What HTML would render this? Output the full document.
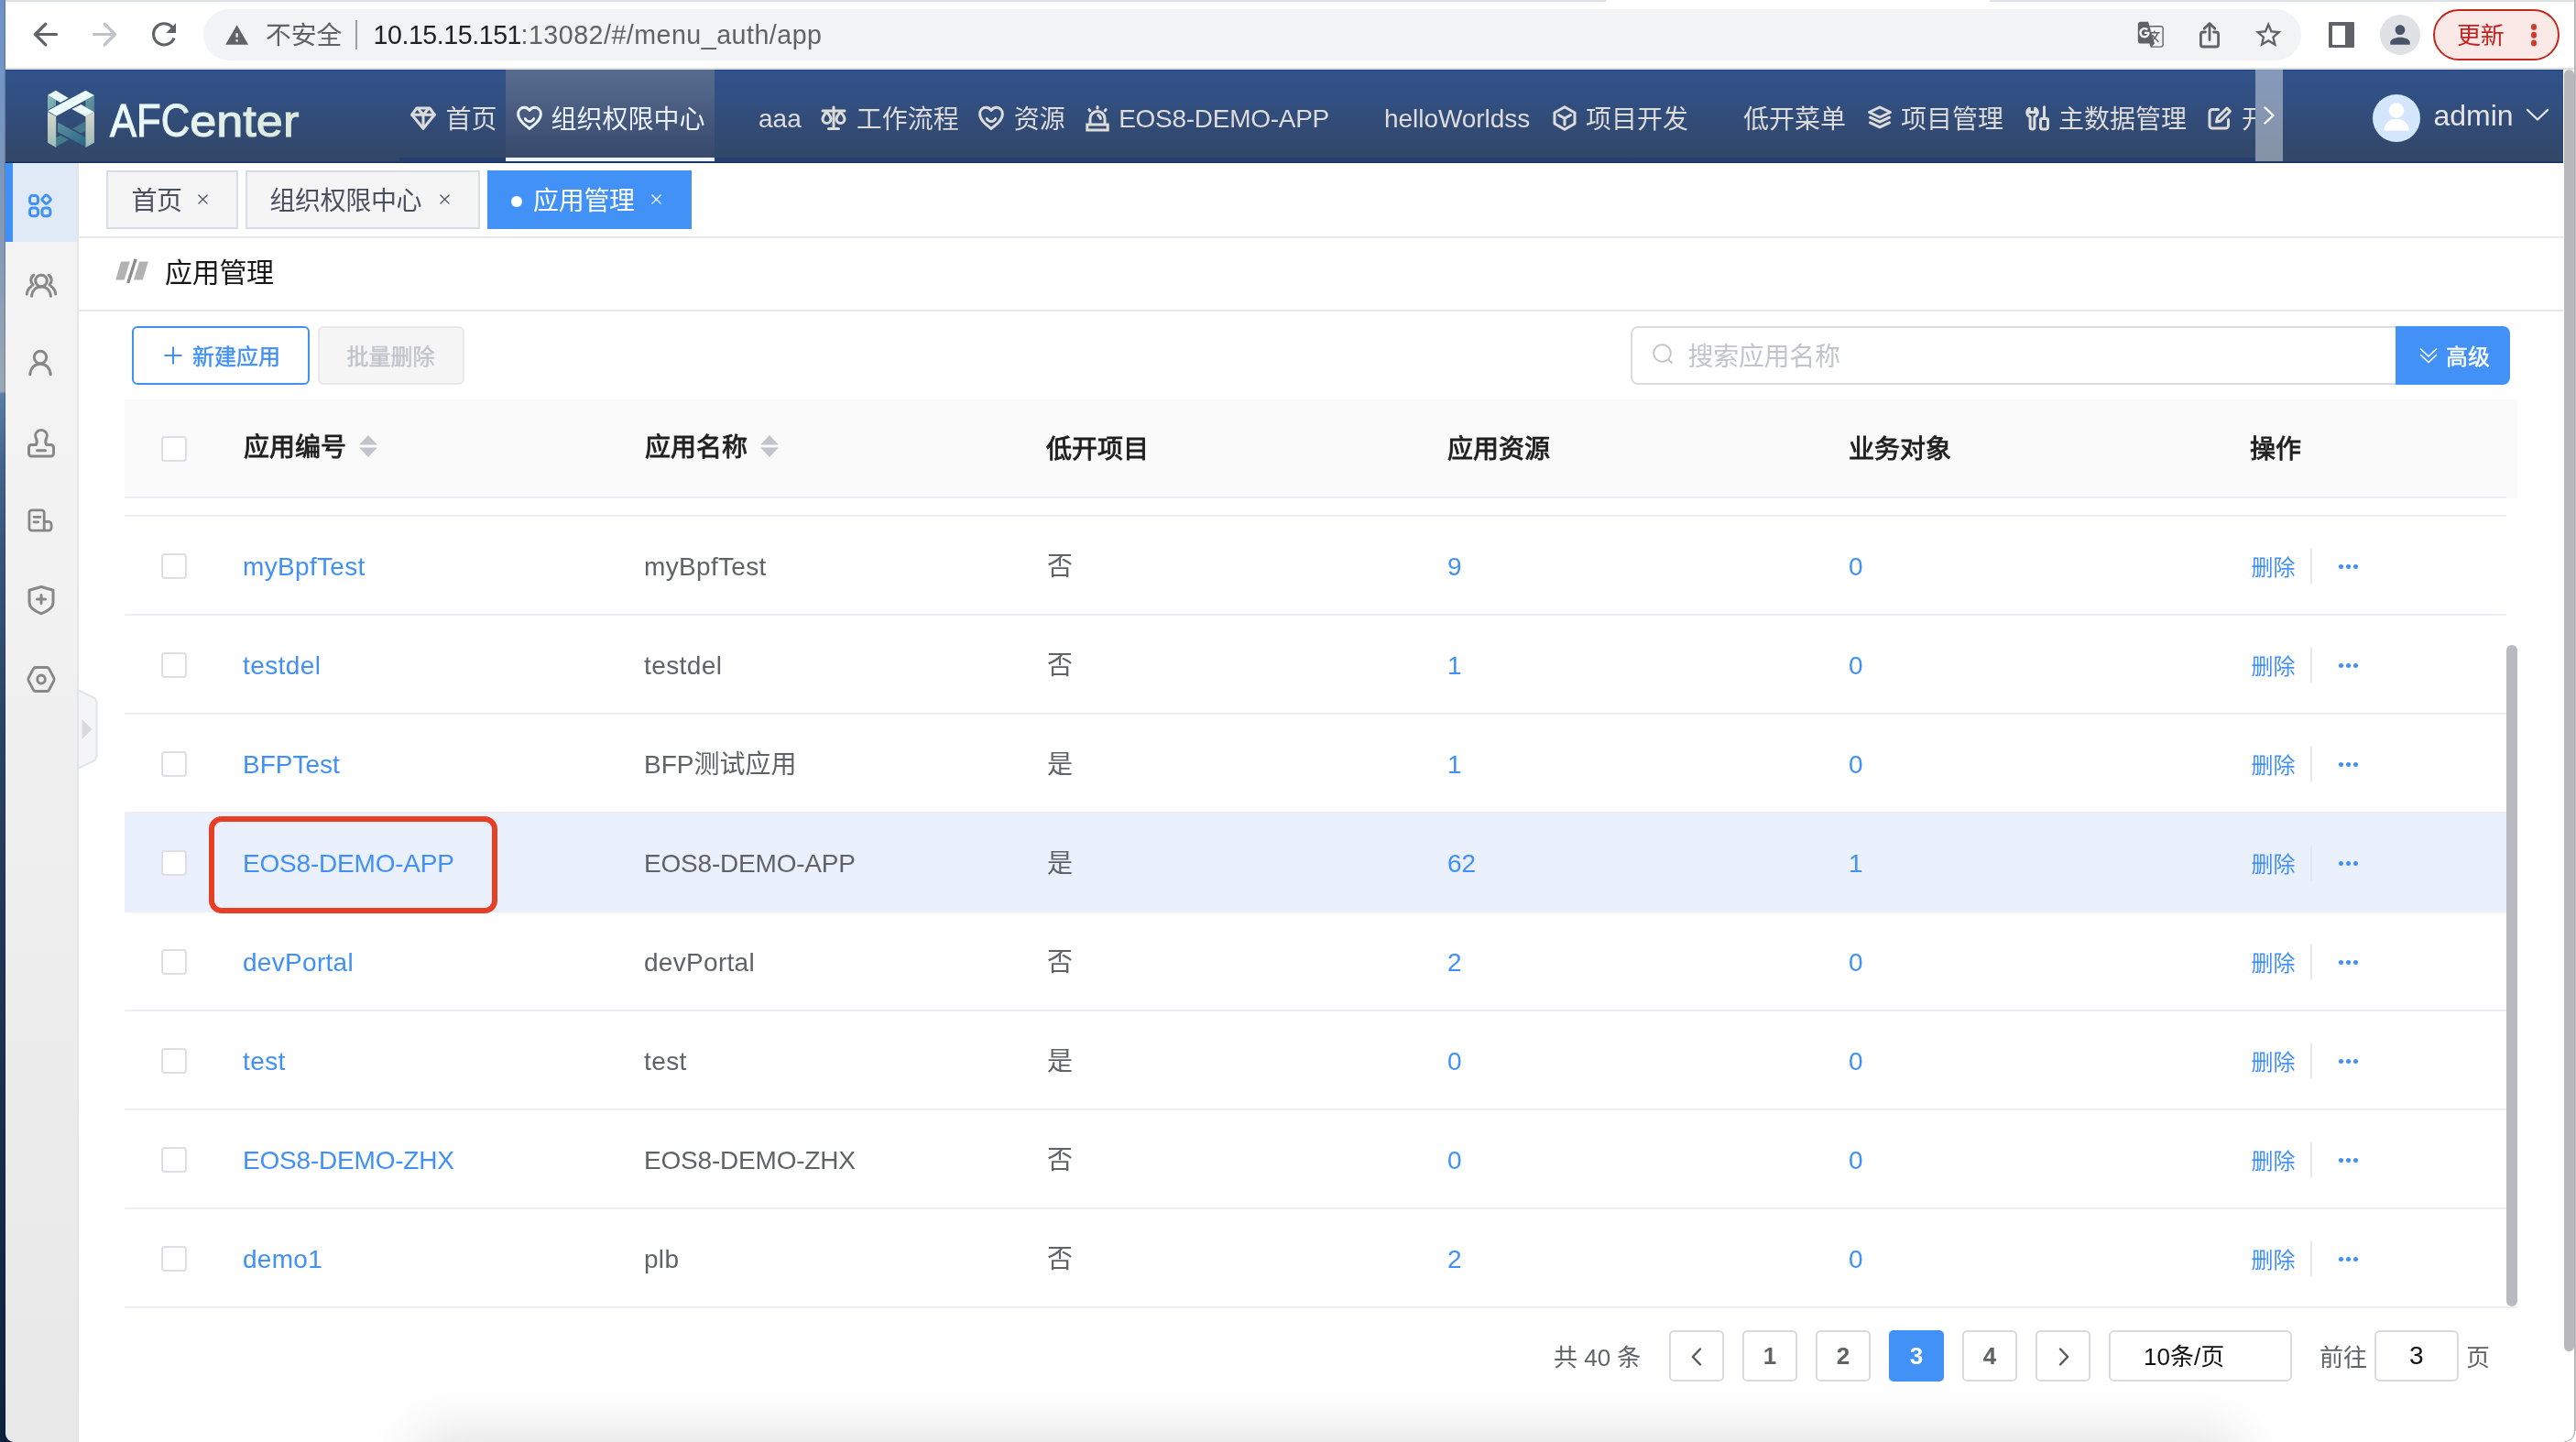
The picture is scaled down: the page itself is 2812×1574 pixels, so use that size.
<!DOCTYPE html>
<html lang="zh-CN">
<head>
<meta charset="utf-8">
<title>AFCenter - 应用管理</title>
<style>
*{box-sizing:border-box;margin:0;padding:0}
html,body{width:2812px;height:1574px;overflow:hidden;background:#fff}
body{font-family:"Liberation Sans","Noto Sans CJK SC",sans-serif;color:#606266;-webkit-font-smoothing:antialiased}
#root{will-change:transform;position:relative;width:2812px;height:1574px;overflow:hidden;background:#fff}
.abs{position:absolute}
svg{display:block;overflow:visible}

/* wallpaper strip on the left */
#wall{position:absolute;left:0;top:0;width:6px;height:1574px;z-index:50;background:linear-gradient(90deg,rgba(0,0,0,0) 60%,rgba(0,0,20,.18) 100%),linear-gradient(180deg,#6f93c8 0,#7396c5 75px,#7b97bd 177px,#899cb6 300px,#9ba8b6 427px,#5a7fab 430px,#46668f 500px,#39557c 600px,#2b4368 800px,#22385a 1000px,#162b4a 1300px,#0e2340 1574px)}
#win{position:absolute;left:0;top:0;width:2812px;height:1574px;background:#fff;overflow:hidden}

/* browser toolbar */
#tabstrip{position:absolute;left:6px;top:0;width:2806px;height:2px;background:#dee1e6}
#tabgap{position:absolute;left:1753px;top:0;width:419px;height:3px;background:#fff;border-radius:0 0 6px 6px}
#tbline{position:absolute;left:6px;top:74px;width:2806px;height:2px;background:#dfe0e0}
#pill{position:absolute;left:222px;top:10px;width:2290px;height:56px;border-radius:28px;background:#f1f3f4}
.urltxt{position:absolute;white-space:nowrap;font-size:28px;line-height:56px;top:0}

/* app header */
#hdr{position:absolute;left:6px;top:76px;width:2792px;height:102px;background:linear-gradient(180deg,#31528b 0%,#314f80 35%,#324a72 70%,#324868 95%);border-bottom:1px solid #17315f;box-shadow:inset 0 -1px 0 rgba(22,48,95,.5),inset 0 1px 0 rgba(30,66,128,.9)}
#menu{position:absolute;left:436px;top:76px;width:2026px;height:101px;overflow:hidden}
#menuline{position:absolute;left:436px;top:172px;width:2026px;height:5px;background:#243f70}
#actline{position:absolute;left:552px;top:172px;width:228px;height:4px;background:#eaf3ff}
.mi{position:absolute;top:0;height:96px;white-space:nowrap;font-size:28px;color:#dedcda;line-height:96px}
.mi svg{position:absolute;left:12px;top:39px}
.mi span{position:absolute;left:48px;top:7px;height:96px;line-height:96px}
.mi span.lat{top:5.700px}
.mi.act{background:linear-gradient(180deg,#576b8f 0%,#4f6387 30%,#46597c 55%,#3d5073 80%,#374a6a 100%);color:#eaf3ff;height:96px}

/* sidebar */
#side{position:absolute;left:6px;top:178px;width:80px;height:1396px;background:linear-gradient(180deg,#f3f3f3 0,#f2f2f2 30%,#ececec 70%,#e8e8e8 100%);border-right:2px solid #e5e5e5}
#side .on{position:absolute;left:0;top:0;width:78px;height:86px;background:#e0eaf6;border-left:8px solid #4090f7}
.sic{position:absolute}

/* tabs */
.tab{position:absolute;top:186px;height:64px;border:2px solid #d8dce5;background:#f5f5f5;font-size:28px;color:#495060;line-height:60px;white-space:nowrap}
.tab.on{background:#4191f7;border-color:#4191f7;color:#fff}
.hline{position:absolute;height:2px;background:#e6e9ef}

/* buttons */
.btn{position:absolute;top:356px;height:64px;border-radius:6px;font-size:24px;line-height:60px;white-space:nowrap}

/* table */
.th{position:absolute;top:436px;height:106px;line-height:106px;font-size:28px;font-weight:400;-webkit-text-stroke:.9px #1f1f1f;color:#1f1f1f;white-space:nowrap}
.row{position:absolute;left:136px;width:2600px;height:108px;border-bottom:2px solid #ebeef5}
.row.hl{background:#ebf0fd;border-bottom-color:#ebf0fd}
.row div{position:absolute;top:0;height:108px;line-height:110px;font-size:28px;white-space:nowrap}
.row .cb{left:40px;top:40px;width:28px;height:28px;border:2px solid #dcdfe6;border-radius:4px;background:#fff}
.row .c1{left:129px;color:#4090f7}
.row .c2{left:567px;color:#606266}
.row .c3{left:1007px;color:#606266}
.row .c4{left:1444px;color:#4090f7}
.row .c5{left:1882px;color:#4090f7}
.row .del{left:2321.5px;top:.5px;font-size:24px;color:#4090f7}
.row .dv{left:2386px;top:35px;width:2px;height:38px;background:#e4e7ed}
.row .dots{left:2417px;top:52px;width:22px;height:6px}
.row .dots i{position:absolute;top:0;width:5px;height:5px;border-radius:50%;background:#4090f7}

/* pagination */
.pg{position:absolute;top:1452px;height:56px;width:60px;border:2px solid #d9dbdf;border-radius:5px;background:#fff;font-size:26px;font-weight:700;color:#606266;text-align:center;line-height:52px}
.pg.on{background:#4191f7;border-color:#4191f7;color:#fff}
.pt{position:absolute;top:1452px;height:56px;line-height:56px;font-size:26px;color:#606266;white-space:nowrap}
</style>
</head>
<body>
<div id="root">
<div id="wall"></div>
<div id="win">
<div id="tabstrip"></div><div id="tabgap"></div>
<div id="pill"></div>
<div id="tbline"></div>
<svg class="abs" style="left:30px;top:18px" width="180" height="40" viewBox="30 18 180 40" fill="none" stroke-linecap="round" stroke-linejoin="round">
 <path d="M61.5 37.5H39M49.8 26.2L38.5 37.5L49.8 48.8" stroke="#5f6368" stroke-width="3.2"/>
 <path d="M102.5 37.5H125M114.2 26.2L125.5 37.5L114.2 48.8" stroke="#bfc2c6" stroke-width="3.2"/>
 <path d="M188.6 30.6A11.6 11.6 0 1 0 190 41.5" stroke="#5f6368" stroke-width="3.2" stroke-linecap="butt"/>
 <path d="M192 25.2V36H181.2Z" fill="#5f6368" stroke="none"/>
</svg>
<svg class="abs" style="left:244.8px;top:25px" width="27.2" height="27.2" viewBox="0 0 24 24"><path fill="#5f6368" d="M1 21h22L12 2 1 21zm12-3h-2v-2h2v2zm0-4h-2v-4h2v4z"/></svg>
<div class="urltxt" style="left:290px;top:11.3px;font-size:27.8px;color:#5f6368;letter-spacing:0">不安全</div>
<div class="abs" style="left:388px;top:22px;width:2px;height:32px;background:#9aa0a6"></div>
<div class="urltxt" style="left:407.5px;top:10px;font-size:28.6px;color:#202124;letter-spacing:-.45px">10.15.15.151</div>
<div class="urltxt" style="left:568.5px;top:10px;font-size:28.6px;color:#5f6368;letter-spacing:.5px">:13082/#/menu_auth/app</div>
<!-- translate -->
<svg class="abs" style="left:2331.2px;top:21.2px" width="33.6" height="33.6" viewBox="0 0 24 24"><path fill="#5f6368" d="M20 5h-9.12L10 2H4c-1.1 0-2 .9-2 2v13c0 1.1.9 2 2 2h7l1 3h8c1.1 0 2-.9 2-2V7c0-1.1-.9-2-2-2zM7.17 14.59c-2.25 0-4.09-1.83-4.09-4.09s1.83-4.09 4.09-4.09c1.04 0 1.99.37 2.74 1.07l.07.06-1.23 1.18-.06-.05c-.29-.27-.78-.59-1.52-.59-1.31 0-2.38 1.09-2.38 2.42s1.07 2.42 2.38 2.42c1.37 0 1.96-.87 2.12-1.46H7.08V9.91h3.95l.01.07c.04.21.05.4.05.61 0 2.35-1.61 4-3.92 4zm6.03-1.71c.33.6.74 1.18 1.19 1.7l-.54.53-.65-2.23zm.77-.76h-.99l-.31-1.04h3.99s-.34 1.31-1.56 2.74c-.52-.62-.89-1.23-1.13-1.7zM21 20c0 .55-.45 1-1 1h-7l2-2-.81-2.77.92-.92L17.79 18l.73-.73-2.71-2.68c.9-1.03 1.6-2.25 1.92-3.51H19v-1.04h-3.64V9h-1.04v1.04h-1.96L11.18 6H20c.55 0 1 .45 1 1v13z"/></svg>
<!-- share -->
<svg class="abs" style="left:2396px;top:20px" width="32" height="36" viewBox="2396 20 32 36" fill="none" stroke="#5f6368" stroke-width="2.8" stroke-linecap="round" stroke-linejoin="round">
 <path d="M2407.5 35H2405a2.6 2.6 0 0 0-2.6 2.6V48.4a2.6 2.6 0 0 0 2.6 2.6h14a2.6 2.6 0 0 0 2.6-2.6V37.6A2.6 2.6 0 0 0 2419 35h-2.5"/>
 <path d="M2412 43.5V26M2406.2 31.2L2412 25.4L2417.8 31.2"/>
</svg>
<!-- star -->
<svg class="abs" style="left:2459px;top:21px" width="34.4" height="34.4" viewBox="0 0 24 24"><path fill="#5f6368" d="M22 9.24l-7.19-.62L12 2 9.19 8.63 2 9.24l5.46 4.73L5.82 21 12 17.27 18.18 21l-1.63-7.03L22 9.24zM12 15.4l-3.76 2.27 1-4.28-3.32-2.88 4.38-.38L12 6.1l1.71 4.04 4.38.38-3.32 2.88 1 4.28L12 15.4z"/></svg>
<!-- side panel -->
<div class="abs" style="left:2542px;top:24px;width:28px;height:28px;background:#5f6368;border-radius:1px"></div>
<div class="abs" style="left:2546px;top:27.500px;width:13.500px;height:21px;background:#fff"></div>
<!-- profile -->
<div class="abs" style="left:2598px;top:16px;width:44px;height:44px;border-radius:50%;background:#dfe1e5"></div>
<svg class="abs" style="left:2604px;top:22px" width="32" height="32" viewBox="0 0 24 24"><path fill="#4a5369" d="M12 12c2.21 0 4-1.79 4-4s-1.790-4-4-4-4 1.790-4 4 1.790 4 4 4zm0 2c-2.670 0-8 1.340-8 4v2h16v-2c0-2.660-5.330-4-8-4z"/></svg>
<!-- update pill -->
<div class="abs" style="left:2656px;top:10px;width:138px;height:56px;border-radius:28px;border:2px solid #c4281c;background:#fbe9e7"></div>
<div class="urltxt" style="left:2682px;top:11.4px;font-size:26px;color:#c5221f;letter-spacing:-.3px">更新</div>
<div class="abs" style="left:2762.8px;top:26.300px;width:6.400px;height:6.400px;border-radius:50%;background:#d13b2c;box-shadow:0 8.800px 0 #d13b2c,0 17.600px 0 #d13b2c"></div>

<div id="hdr"></div>
<!-- logo -->
<svg class="abs" style="left:46px;top:94px" width="64" height="72" viewBox="0 0 1282 1442">
 <defs>
  <linearGradient id="lgP" x1="0" y1="0" x2="0" y2="1"><stop offset="0" stop-color="#d9d9cd"/><stop offset="1" stop-color="#9db9b5"/></linearGradient>
  <linearGradient id="lgS" x1="0" y1="0" x2="1" y2="1"><stop offset="0" stop-color="#8fbcbc"/><stop offset="1" stop-color="#66a0a6"/></linearGradient>
  <linearGradient id="lgS2" x1="0" y1="0" x2="1" y2="1"><stop offset="0" stop-color="#6a9ba4"/><stop offset="1" stop-color="#4f8594"/></linearGradient>
  <linearGradient id="lgX" x1="0" y1="0" x2="1" y2="1"><stop offset="0" stop-color="#5c909c"/><stop offset="1" stop-color="#296688"/></linearGradient>
 </defs>
 <polygon points="940,775 940,985 850,1030 665,925" fill="#44798e"/>
 <polygon points="305,1125 400,1076 580,1170 305,1322" fill="#457b8f"/>
 <polygon points="340,790 940,1115 940,1320 340,1000" fill="url(#lgX)"/>
 <polygon points="120,200 300,300 300,425 120,520" fill="url(#lgS)"/>
 <polygon points="950,305 1140,200 1140,565 950,457" fill="url(#lgS2)"/>
 <polygon points="120,560 305,665 305,1340 120,1235" fill="url(#lgP)"/>
 <polygon points="950,665 1140,570 1140,1235 950,1340" fill="url(#lgP)"/>
 <polygon points="120,195 300,95 575,260 400,360" fill="#ebfbfb"/>
 <polygon points="650,500 850,400 1140,565 950,665" fill="#ebfbfb"/>
 <polygon points="120,540 950,95 1140,200 310,655" fill="#ebfbfb"/>
</svg>
<svg class="abs" id="brand" style="left:110px;top:96px" width="240" height="70" viewBox="110 96 240 70" font-family="'Liberation Sans',sans-serif"><defs><linearGradient id="lgT" gradientUnits="userSpaceOnUse" x1="119" y1="0" x2="327" y2="0"><stop offset="0" stop-color="#ecfcfc"/><stop offset=".45" stop-color="#e6f4ee"/><stop offset="1" stop-color="#dae7d9"/></linearGradient><linearGradient id="lgT1" gradientUnits="userSpaceOnUse" x1="0" y1="0" x2="96" y2="0"><stop offset="0" stop-color="#ecfcfc"/><stop offset="1" stop-color="#e8f7f2"/></linearGradient><linearGradient id="lgT2" gradientUnits="userSpaceOnUse" x1="0" y1="0" x2="114" y2="0"><stop offset="0" stop-color="#e7f5ef"/><stop offset="1" stop-color="#dae7d9"/></linearGradient></defs><text x="120" y="148.800" font-size="50.500" fill="url(#lgT)" stroke="url(#lgT)" stroke-width="1.080"><tspan textLength="87.300" lengthAdjust="spacingAndGlyphs">AFC</tspan><tspan font-size="48" textLength="119" lengthAdjust="spacingAndGlyphs">enter</tspan></text></svg>
<!-- nav menu -->
<div id="menu">
 <div class="mi" style="left:0;width:116px"><svg style="top:39.600px;left:12.200px" width="28" height="26" viewBox="0 0 28 26" fill="none" stroke="#dedcda" stroke-width="3" stroke-linejoin="round" stroke-linecap="round"><path d="M7 2H21L26.300 9.200 14 24.300 1.700 9.200z"/><path d="M1.700 9.200H26.300M8.300 2.500L14 9.200l5.700-6.700M14 9.200V23.500"/></svg><span style="left:50.5px">首页</span></div>
 <div class="mi act" style="left:116px;width:228px"><svg width="28" height="28" viewBox="0 0 28 28" fill="none" stroke="#eaf3ff" stroke-width="2.900" stroke-linecap="round" stroke-linejoin="round"><path d="M14 25.5C8.5 21.2 1.6 16 1.6 9.2C1.6 5.2 4.6 2.2 8.2 2.2c2.4 0 4.6 1.3 5.8 3.4c1.2-2.100 3.400-3.400 5.800-3.400c3.600 0 6.600 3 6.600 7c0 6.800-6.900 12-12.400 16.300z"/><path d="M9.300 14.600c1.100 2 2.800 3 4.700 3s3.600-1 4.700-3"/></svg><span style="left:49.5px">组织权限中心</span></div>
 <div class="mi" style="left:344px;width:107px"><span class="lat">aaa</span></div>
 <div class="mi" style="left:450.7px;width:172px"><svg style="left:9px" width="28" height="28" viewBox="0 0 28 28" fill="none" stroke="#dedcda" stroke-width="3" stroke-linecap="round" stroke-linejoin="round"><path d="M14 2V25.500M8.500 25.500h11M2 6h24"/><path d="M6.500 6.800c-1.500 2.600-4.500 5.300-4.500 8.300a4.500 4.500 0 0 0 9 0c0-3-3-5.700-4.500-8.300zM21.500 6.800c-1.500 2.600-4.500 5.300-4.500 8.300a4.500 4.500 0 0 0 9 0c0-3-3-5.700-4.500-8.300z"/></svg><span>工作流程</span></div>
 <div class="mi" style="left:622.7px;width:116px"><svg style="left:9px" width="28" height="28" viewBox="0 0 28 28" fill="none" stroke="#dedcda" stroke-width="2.900" stroke-linecap="round" stroke-linejoin="round"><path d="M14 25.500C8.500 21.200 1.600 16 1.600 9.200C1.600 5.200 4.600 2.200 8.200 2.200c2.400 0 4.600 1.300 5.800 3.400c1.200-2.100 3.400-3.400 5.800-3.400c3.600 0 6.600 3 6.600 7c0 6.800-6.900 12-12.400 16.300z"/><path d="M9.300 14.600c1.100 2 2.800 3 4.700 3s3.600-1 4.700-3"/></svg><span>资源</span></div>
 <div class="mi" style="left:738.7px;width:291px"><svg style="left:9px" width="28" height="28" viewBox="0 0 28 28" fill="none" stroke="#dedcda" stroke-width="3" stroke-linecap="round" stroke-linejoin="round"><path d="M6 20.500V14.500a8 8 0 0 1 16 0v6"/><path d="M2.800 21h22.400v6H2.800z" stroke-linejoin="miter"/><path d="M14 1.500v1.500M4.800 4.600l1 1.300M23.200 4.600l-1 1.300M14.800 10.800c1.300 1 2.200 2.200 2.600 3.700"/></svg><span class="lat" style="letter-spacing:-.28px;left:46.5px">EOS8-DEMO-APP</span></div>
 <div class="mi" style="left:1029px;width:218px"><span class="lat" style="letter-spacing:-.05px;left:46px">helloWorldss</span></div>
 <div class="mi" style="left:1247px;width:172px"><svg style="left:11px" width="28" height="28" viewBox="0 0 28 28" fill="none" stroke="#dedcda" stroke-width="3" stroke-linecap="round" stroke-linejoin="round"><path d="M14 1.800L25 8v12l-11 6.200L3 20V8z"/><path d="M7.500 10.500L14 14.200l6.500-3.700M14 14.200V21"/></svg><span>项目开发</span></div>
 <div class="mi" style="left:1419px;width:172px"><span>低开菜单</span></div>
 <div class="mi" style="left:1591px;width:172px"><svg style="left:10.5px" width="28" height="28" viewBox="0 0 28 28" fill="none" stroke="#dedcda" stroke-width="3" stroke-linecap="round" stroke-linejoin="round"><path d="M14 2l11.500 5.500L14 13 2.500 7.500z"/><path d="M3.500 13.200l10.500 5 10.500-5M3.500 18.800l10.500 5 10.500-5"/></svg><span>项目管理</span></div>
 <div class="mi" style="left:1763px;width:200px"><svg width="28" height="28" viewBox="0 0 28 28" fill="none" stroke="#dedcda" stroke-width="3" stroke-linecap="round" stroke-linejoin="round"><path d="M4.400 3.300a5.200 5.200 0 0 0 .700 9.400V23.500a2.400 2.400 0 0 0 4.800 0V12.700a5.200 5.200 0 0 0 .700-9.400V7.500H4.400z"/><path d="M20.500 1.800V14.500M18 14.500h5a1.500 1.500 0 0 1 1.500 1.500v7.500a2.400 2.400 0 0 1-2.400 2.400h-3.200a2.400 2.400 0 0 1-2.400-2.400V16a1.500 1.500 0 0 1 1.500-1.500z"/></svg><span>主数据管理</span></div>
 <div class="mi" style="left:1963px;width:172px"><svg style="left:10px" width="28" height="28" viewBox="0 0 28 28" fill="none" stroke="#dedcda" stroke-width="3" stroke-linecap="round" stroke-linejoin="round"><path d="M12.500 4.500H6a3 3 0 0 0-3 3V22a3 3 0 0 0 3 3h14.500a3 3 0 0 0 3-3v-6.500"/><path d="M11.500 13.500L22 3l3.500 3.500L15 17l-4.500 1z"/></svg><span>开发中心</span></div>
</div>
<div id="menuline"></div><div id="actline"></div>
<div class="abs" style="left:2462px;top:76px;width:30px;height:100px;background:rgba(255,255,255,.41)"></div>
<svg class="abs" style="left:2468px;top:114px" width="18" height="24" viewBox="0 0 18 24" fill="none" stroke="#fff" stroke-width="2.400" stroke-linecap="round" stroke-linejoin="round"><path d="M4.500 3.500l9 8.500-9 8.500"/></svg>
<!-- avatar -->
<div class="abs" style="left:2590px;top:103px;width:52px;height:52px;border-radius:50%;background:#d4e6fc;overflow:hidden">
 <svg width="52" height="52" viewBox="0 0 52 52"><circle cx="26" cy="17.500" r="8.300" fill="#fff"/><path d="M12 39.500c1.500-9 7-12.800 14-12.800s12.500 3.800 14 12.800z" fill="#fff"/></svg>
</div>
<div class="abs" style="left:2656.5px;top:102px;height:48px;line-height:48px;font-size:32px;color:#e6e4e2;white-space:nowrap">admin</div>
<svg class="abs" style="left:2756px;top:116px" width="28" height="18" viewBox="0 0 28 18" fill="none" stroke="#e6e4e2" stroke-width="2.400" stroke-linecap="round" stroke-linejoin="round"><path d="M3 4l11 10.500L25 4"/></svg>

<div id="side"><div class="on"></div></div>
<!-- sidebar icons -->
<svg class="abs" style="left:31px;top:210.700px" width="27" height="27" viewBox="0 0 27 27" fill="none" stroke="#4090f7" stroke-width="3" stroke-linejoin="round"><rect x="1.500" y="2.600" width="9" height="9" rx="3"/><rect x="1.500" y="16" width="9" height="8.800" rx="3"/><rect x="14.900" y="16" width="9" height="8.800" rx="3"/><rect x="-3.800" y="-3.800" width="7.600" height="7.600" rx="1.800" stroke-width="2.800" transform="translate(19.600 6.700) rotate(45)"/></svg>
<svg class="abs" style="left:27px;top:296px" width="36" height="30" viewBox="0 0 36 30" fill="none" stroke="#878787" stroke-width="3" stroke-linecap="round" stroke-linejoin="round"><circle cx="18" cy="10.500" r="6.300"/><path d="M7.600 27.300c.6-6.400 4.800-10.300 10.400-10.300s9.800 3.900 10.400 10.300"/><path d="M9.800 4.300c-2 1.200-3 3.300-3 5.700 0 2 .8 3.800 2.200 5M2.300 25c.4-3.800 2-6.600 4.700-8.300M26.200 4.300c2 1.200 3 3.300 3 5.700 0 2-.8 3.800-2.200 5M33.700 25c-.4-3.800-2-6.600-4.700-8.300"/></svg>
<svg class="abs" style="left:30px;top:380px" width="28" height="32" viewBox="0 0 28 32" fill="none" stroke="#878787" stroke-width="3" stroke-linecap="round" stroke-linejoin="round"><circle cx="14" cy="10" r="6.700"/><path d="M2.800 28.800c.6-7.200 5.200-11.600 11.200-11.600s10.600 4.400 11.200 11.600"/></svg>
<svg class="abs" style="left:29px;top:466px" width="32" height="34" viewBox="0 0 32 34" fill="none" stroke="#878787" stroke-width="3" stroke-linecap="round" stroke-linejoin="round"><path d="M10.300 19.500c1.400-2.300 1.300-4.400.3-6.500a6.300 6.300 0 1 1 10.800 0c-1 2.100-1.100 4.200.3 6.500h4.800a3 3 0 0 1 3 3V29a3 3 0 0 1-3 3H5.500a3 3 0 0 1-3-3v-6.500a3 3 0 0 1 3-3z"/><path d="M11.500 25.800h9"/></svg>
<svg class="abs" style="left:30px;top:554.500px" width="28" height="26" viewBox="0 0 30 28" fill="none" stroke="#878787" stroke-width="3" stroke-linecap="round" stroke-linejoin="round"><path d="M19.500 26H5a3 3 0 0 1-3-3V5a3 3 0 0 1 3-3h11.500a3 3 0 0 1 3 3v21zM19.500 15.500h5a3.500 3.500 0 0 1 3.500 3.500v4a3 3 0 0 1-3 3h-5.500"/><path d="M7.500 10h7.500M7.500 16h5"/></svg>
<svg class="abs" style="left:29px;top:638px" width="32" height="34" viewBox="0 0 32 34" fill="none" stroke="#878787" stroke-width="3" stroke-linecap="round" stroke-linejoin="round"><path d="M16 2.500l13 3.800v13.200c0 5.200-5.500 9.500-13 12.300C8.500 29 3 24.700 3 19.500V6.300z"/><path d="M16 11.500v9M11.500 16h9"/></svg>
<svg class="abs" style="left:29px;top:726px" width="32" height="31" viewBox="0 0 34 31" preserveAspectRatio="none" fill="none" stroke="#878787" stroke-width="3" stroke-linecap="round" stroke-linejoin="round"><path d="M10.500 2.500h13a3 3 0 0 1 2.600 1.500l5.600 10a3 3 0 0 1 0 3l-5.600 10a3 3 0 0 1-2.600 1.500h-13A3 3 0 0 1 7.900 27L2.300 17a3 3 0 0 1 0-3L7.900 4a3 3 0 0 1 2.600-1.500z"/><circle cx="17" cy="15.500" r="4.600"/></svg>
<!-- collapse handle -->
<svg class="abs" style="left:85px;top:752px" width="24" height="88" viewBox="0 0 24 88"><path d="M0 1L17 9.500a6 6 0 0 1 3.500 5.500V73a6 6 0 0 1-3.500 5.500L0 87z" fill="#f5f5f6" stroke="#e2e6eb" stroke-width="2.300"/><path d="M4.500 33L15.500 44 4.500 55z" fill="#d9d9d9"/></svg>

<div class="tab" style="left:116px;width:144px"><span class="abs" style="left:25.5px;top:2px;letter-spacing:-.4px">首页</span><svg class="abs" style="left:95.7px;top:22.2px" width="15.5" height="15.5" viewBox="0 0 16 16" stroke="#495060" stroke-width="1.400" stroke-linecap="round"><path d="M3 3l9.500 9.500M12.500 3L3 12.500"/></svg></div>
<div class="tab" style="left:268px;width:256px"><span class="abs" style="left:24.5px;top:2px;letter-spacing:-.4px">组织权限中心</span><svg class="abs" style="left:207.7px;top:22.2px" width="15.5" height="15.5" viewBox="0 0 16 16" stroke="#495060" stroke-width="1.400" stroke-linecap="round"><path d="M3 3l9.500 9.500M12.500 3L3 12.500"/></svg></div>
<div class="tab on" style="left:532px;width:223px"><i class="abs" style="left:24px;top:26px;width:12px;height:12px;border-radius:50%;background:#fff"></i><span class="abs" style="left:48px;top:2px;letter-spacing:-.3px">应用管理</span><svg class="abs" style="left:174.700px;top:22.200px" width="15.500" height="15.500" viewBox="0 0 16 16" stroke="#fff" stroke-width="1.400" stroke-linecap="round"><path d="M3 3l9.500 9.500M12.500 3L3 12.500"/></svg></div>
<div class="hline" style="left:86px;top:258px;width:2712px"></div>
<!-- title -->
<svg class="abs" style="left:124px;top:281px" width="40" height="30" viewBox="0 0 40 30"><path d="M8.100 4.400h9.700L11.600 24.600H2.200z" fill="#b2b2b2"/><path d="M28.200 4.400h9.700L31.700 24.600H22z" fill="#b2b2b2"/><path d="M24.100 1.800L15.700 28.100" stroke="#8c8c8c" stroke-width="3.300" fill="none"/></svg>
<div class="abs" style="left:180px;top:272.500px;height:50px;line-height:50px;font-size:30px;color:#161616;white-space:nowrap;letter-spacing:-.3px">应用管理</div>
<div class="hline" style="left:86px;top:338px;width:2712px;background:#e7e7e7"></div>

<div class="btn" style="left:144px;width:194px;border:2px solid #4090f7;background:#fff;color:#4090f7;-webkit-text-stroke:.45px #4090f7"><svg class="abs" style="left:33px;top:20px" width="20" height="20" viewBox="0 0 20 20" stroke="#4090f7" stroke-width="2" stroke-linecap="round"><path d="M10 1.200v17.600M1.200 10h17.600"/></svg><span class="abs" style="left:64px;top:1.5px">新建应用</span></div>
<div class="btn" style="left:347px;width:160px;border:2px solid #e9e9eb;background:#f5f5f5;color:#c0c4cc;-webkit-text-stroke:.45px #c0c4cc"><span class="abs" style="left:29.5px;top:1.5px">批量删除</span></div>
<div class="abs" style="left:1780px;top:356px;width:837px;height:64px;border:2px solid #d9dce1;border-radius:8px 0 0 8px;background:#fff"></div>
<svg class="abs" style="left:1802px;top:373px" width="26" height="26" viewBox="0 0 26 26" fill="none" stroke="#c0c4cc" stroke-width="1.900" stroke-linecap="round"><circle cx="12.500" cy="12.500" r="9.300"/><path d="M19.300 19.300l3.700 3.700"/></svg>
<div class="abs" style="left:1842.5px;top:360px;height:60px;line-height:60px;font-size:28px;color:#c0c4cc;white-space:nowrap;letter-spacing:-.3px">搜索应用名称</div>
<div class="abs" style="left:2615px;top:356px;width:125px;height:64px;border-radius:0 8px 8px 0;background:#4191f7"></div>
<svg class="abs" style="left:2640px;top:378px" width="22" height="20" viewBox="0 0 22 20" fill="none" stroke="#fff" stroke-width="1.700" stroke-linecap="round" stroke-linejoin="round"><path d="M2.500 3l8.500 8 8.500-8M2.500 9.500l8.500 8 8.500-8"/></svg>
<div class="abs" style="left:2670px;top:359.5px;height:60px;line-height:60px;font-size:24px;color:#fff;white-space:nowrap;-webkit-text-stroke:.45px #fff">高级</div>

<div class="abs" style="left:136px;top:436px;width:2612px;height:108px;background:#fafafa"></div>
<div class="abs" style="left:136px;top:542px;width:2600px;height:2px;background:#ebeef5"></div>
<div class="abs" style="left:176px;top:476px;width:28px;height:28px;border:2px solid #dcdfe6;border-radius:4px;background:#fff"></div>
<div class="th" style="left:266px">应用编号</div><svg class="abs" style="left:392px;top:475px" width="20" height="24" viewBox="0 0 20 24"><path d="M10 0l10 10.500H0zM10 24L0 13.500h20z" fill="#c0c4cc"/></svg>
<div class="th" style="left:704px">应用名称</div><svg class="abs" style="left:830px;top:475px" width="20" height="24" viewBox="0 0 20 24"><path d="M10 0l10 10.500H0zM10 24L0 13.500h20z" fill="#c0c4cc"/></svg>
<div class="th" style="left:1142px;top:438px">低开项目</div>
<div class="th" style="left:1580px;top:438px">应用资源</div>
<div class="th" style="left:2018px;top:438px">业务对象</div>
<div class="th" style="left:2456px;top:438px">操作</div>
<div class="abs" style="left:136px;top:562px;width:2600px;height:2px;background:#ebeef5"></div>
<div class="abs" style="left:136px;top:886px;width:2600px;height:110px;background:#ebf0fd"></div>
<div class="row" style="top:564px"><div class="cb"></div><div class="c1" style="letter-spacing:0.33px">myBpfTest</div><div class="c2" style="letter-spacing:0.33px">myBpfTest</div><div class="c3">否</div><div class="c4">9</div><div class="c5">0</div><div class="del">删除</div><div class="dv"></div><div class="dots"><i style="left:0"></i><i style="left:8px"></i><i style="left:16px"></i></div></div>
<div class="row" style="top:672px"><div class="cb"></div><div class="c1" style="letter-spacing:0.4px">testdel</div><div class="c2" style="letter-spacing:0.4px">testdel</div><div class="c3">否</div><div class="c4">1</div><div class="c5">0</div><div class="del">删除</div><div class="dv"></div><div class="dots"><i style="left:0"></i><i style="left:8px"></i><i style="left:16px"></i></div></div>
<div class="row" style="top:780px"><div class="cb"></div><div class="c1">BFPTest</div><div class="c2">BFP测试应用</div><div class="c3">是</div><div class="c4">1</div><div class="c5">0</div><div class="del">删除</div><div class="dv"></div><div class="dots"><i style="left:0"></i><i style="left:8px"></i><i style="left:16px"></i></div></div>
<div class="row hl" style="top:888px"><div class="cb"></div><div class="c1" style="letter-spacing:-0.2px">EOS8-DEMO-APP</div><div class="c2" style="letter-spacing:-0.2px">EOS8-DEMO-APP</div><div class="c3">是</div><div class="c4">62</div><div class="c5">1</div><div class="del">删除</div><div class="dv"></div><div class="dots"><i style="left:0"></i><i style="left:8px"></i><i style="left:16px"></i></div></div>
<div class="row" style="top:996px"><div class="cb"></div><div class="c1" style="letter-spacing:0.3px">devPortal</div><div class="c2" style="letter-spacing:0.3px">devPortal</div><div class="c3">否</div><div class="c4">2</div><div class="c5">0</div><div class="del">删除</div><div class="dv"></div><div class="dots"><i style="left:0"></i><i style="left:8px"></i><i style="left:16px"></i></div></div>
<div class="row" style="top:1104px"><div class="cb"></div><div class="c1" style="letter-spacing:0.4px">test</div><div class="c2" style="letter-spacing:0.4px">test</div><div class="c3">是</div><div class="c4">0</div><div class="c5">0</div><div class="del">删除</div><div class="dv"></div><div class="dots"><i style="left:0"></i><i style="left:8px"></i><i style="left:16px"></i></div></div>
<div class="row" style="top:1212px"><div class="cb"></div><div class="c1" style="letter-spacing:-0.2px">EOS8-DEMO-ZHX</div><div class="c2" style="letter-spacing:-0.2px">EOS8-DEMO-ZHX</div><div class="c3">否</div><div class="c4">0</div><div class="c5">0</div><div class="del">删除</div><div class="dv"></div><div class="dots"><i style="left:0"></i><i style="left:8px"></i><i style="left:16px"></i></div></div>
<div class="row" style="top:1320px"><div class="cb"></div><div class="c1" style="letter-spacing:0.3px">demo1</div><div class="c2" style="letter-spacing:0.3px">plb</div><div class="c3">否</div><div class="c4">2</div><div class="c5">0</div><div class="del">删除</div><div class="dv"></div><div class="dots"><i style="left:0"></i><i style="left:8px"></i><i style="left:16px"></i></div></div>
<div class="abs" style="left:228px;top:891px;width:315px;height:106px;border:6px solid #e83e25;border-radius:14px"></div>

<div class="pt" style="left:1696px;top:1453.5px">共 40 条</div>
<div class="pg" style="left:1822px"><svg class="abs" style="left:20px;top:15px" width="16" height="24" viewBox="0 0 16 24" fill="none" stroke="#55585e" stroke-width="2.400" stroke-linecap="round" stroke-linejoin="round"><path d="M12 3.500L3.800 12 12 20.500"/></svg></div>
<div class="pg" style="left:1902px">1</div>
<div class="pg" style="left:1982px">2</div>
<div class="pg on" style="left:2062px">3</div>
<div class="pg" style="left:2142px">4</div>
<div class="pg" style="left:2222px"><svg class="abs" style="left:21px;top:15px" width="16" height="24" viewBox="0 0 16 24" fill="none" stroke="#55585e" stroke-width="2.400" stroke-linecap="round" stroke-linejoin="round"><path d="M4 3.500l8.200 8.500L4 20.500"/></svg></div>
<div class="abs" style="left:2302px;top:1452px;width:200px;height:56px;border:2px solid #d9dbdf;border-radius:6px;background:#fff"></div>
<div class="pt" style="left:2340px;top:1453px;color:#111">10条/页</div>
<div class="pt" style="left:2532px;top:1453.5px">前往</div>
<div class="abs" style="left:2592px;top:1452px;width:92px;height:56px;border:2px solid #d9dbdf;border-radius:6px;background:#fff"></div>
<div class="pt" style="left:2630px;font-size:28px;color:#111">3</div>
<div class="pt" style="left:2692px;top:1453.5px">页</div>

<div class="abs" style="left:2736px;top:704px;width:12px;height:722px;border-radius:6px;background:#b9babf"></div>
<div class="abs" style="left:2736px;top:1426px;width:12px;height:2px;background:#ebeef5"></div>
<div class="abs" style="left:2798.500px;top:76px;width:11.500px;height:1399px;border-radius:5.500px;background:#b9b9bd"></div>
<div class="abs" style="left:2810px;top:0;width:2px;height:1562px;background:linear-gradient(90deg,#adadad,#c4c4c4)"></div>
<svg class="abs" style="left:2796px;top:1560px" width="16" height="14" viewBox="0 0 16 14" fill="none"><path d="M14.500 0v2A11 11 0 0 1 3.500 13.500" stroke="#bdbdbd" stroke-width="1.300"/></svg>
<svg class="abs" style="left:6px;top:1564px;z-index:51" width="10" height="10" viewBox="0 0 10 10"><path d="M0 0V10H9A9 9 0 0 1 0 1z" fill="#0e2340"/></svg>
<div class="abs" style="left:454px;top:3000px;width:1990px;height:200px;border-radius:20px;box-shadow:0 -1435px 60px rgba(0,0,0,.125)"></div>

</div>
</div>
</body>
</html>
